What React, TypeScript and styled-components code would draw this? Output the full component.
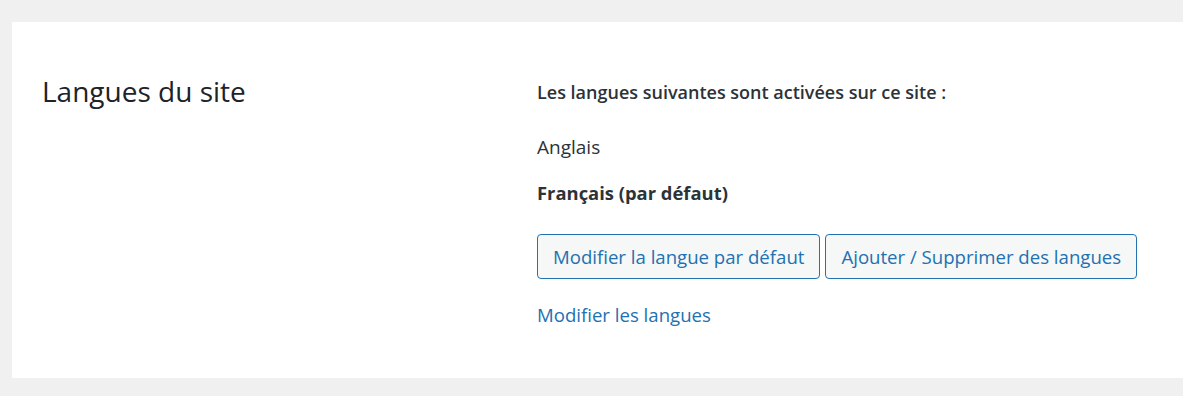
import React from "react";
import styled, { createGlobalStyle } from "styled-components";

const Global = createGlobalStyle`
  html, body { margin: 0; padding: 0; background: #f0f0f1; }
  body { font-family: "Open Sans", "Noto Sans", sans-serif; color: #1d2327; }
`;

const Page = styled.div`
  padding: 22px 0 18px 12px;
`;

const Card = styled.section`
  background: #fff;
  display: grid;
  grid-template-columns: 495px 1fr;
  padding: 54px 30px 40px 30px;
  min-height: 262px;
`;

const Title = styled.h2`
  margin: 0;
  font-size: 28px;
  font-weight: 400;
  line-height: 30px;
  color: #1d2327;
`;

const Content = styled.div`
  display: flex;
  flex-direction: column;
  align-items: flex-start;
`;

const Lead = styled.p`
  margin: 4px 0 0;
  font-size: 18px;
  font-weight: 600;
  line-height: 24px;
  color: #2c3338;
`;

const Lang = styled.p<{ $default?: boolean }>`
  margin: ${(p) => (p.$default ? "22px" : "31px")} 0 0;
  font-size: ${(p) => (p.$default ? "18.4px" : "19px")};
  line-height: 24px;
  font-weight: ${(p) => (p.$default ? 700 : 400)};
  color: #2c3338;
`;

const Buttons = styled.div`
  display: flex;
  gap: 5px;
  margin-top: 29px;
`;

const Button = styled.button`
  font-family: inherit;
  font-size: 18.6px;
  line-height: 24px;
  height: 45px;
  padding: 0 15px;
  color: #2271b1;
  background: #f6f7f7;
  border: 1px solid #2271b1;
  border-radius: 4px;
  cursor: pointer;
`;

const Link = styled.a`
  margin-top: 24px;
  font-size: 18.6px;
  line-height: 24px;
  color: #2271b1;
  text-decoration: none;
`;

export default function App() {
  return (
    <>
      <Global />
      <Page>
        <Card>
          <Title>Langues du site</Title>
          <Content>
            <Lead>Les langues suivantes sont activées sur ce site :</Lead>
            <Lang>Anglais</Lang>
            <Lang $default>Français (par défaut)</Lang>
            <Buttons>
              <Button>Modifier la langue par défaut</Button>
              <Button>Ajouter / Supprimer des langues</Button>
            </Buttons>
            <Link href="#">Modifier les langues</Link>
          </Content>
        </Card>
      </Page>
    </>
  );
}
